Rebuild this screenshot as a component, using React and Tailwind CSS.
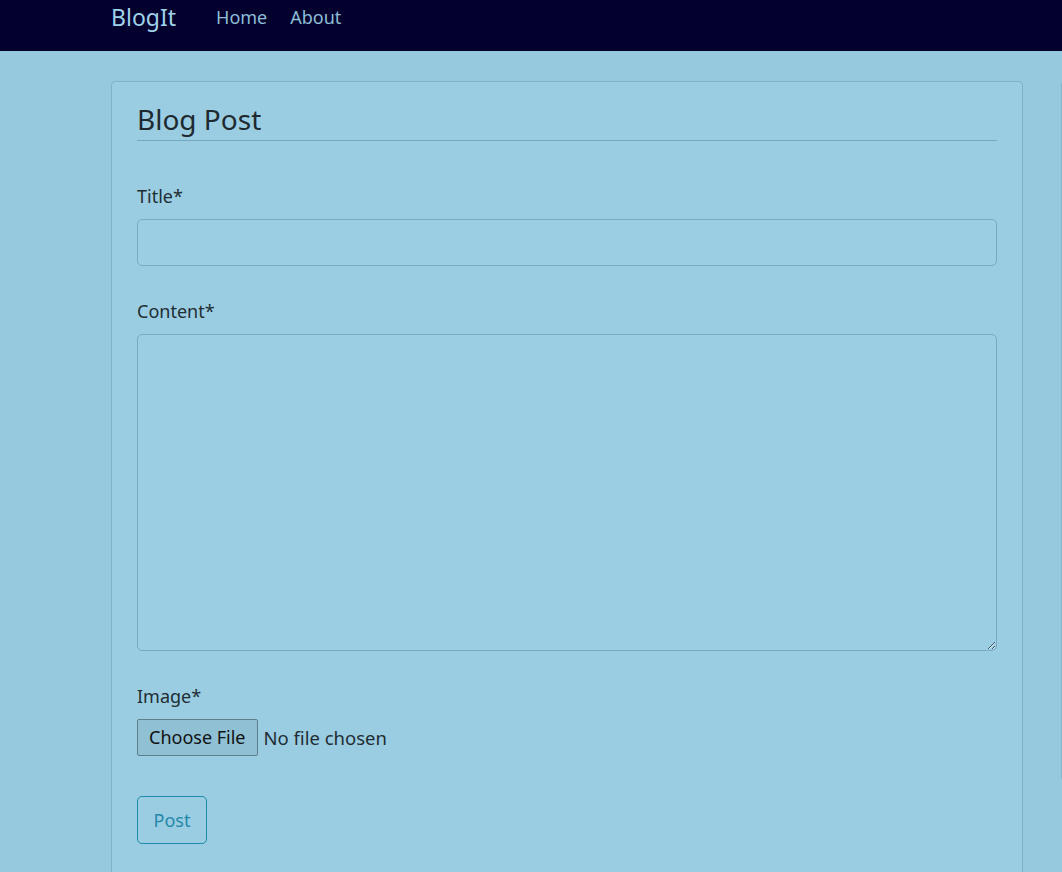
import { useState } from 'react'

const FONT = { fontFamily: '"Noto Sans", "Open Sans", sans-serif' }

function Field({ label, children }) {
  return (
    <div className="mb-[32px]">
      <label className="block text-[18px] leading-[27px] text-[#1f2d33] mb-[9px]">{label}</label>
      {children}
    </div>
  )
}

export default function App() {
  const [title, setTitle] = useState('')
  const [content, setContent] = useState('')

  return (
    <div className="min-h-screen overflow-x-hidden bg-[#96c9dd]" style={FONT}>
      {/* Navbar */}
      <nav className="h-[51px] bg-[#03002e]">
        <div className="h-full flex items-start pl-[111px] pt-[2px]">
          <a href="#" className="text-[23px] leading-[31px] text-[#9fd3ea] mr-[40px]">BlogIt</a>
          <div className="flex gap-[23px] pt-[2px]">
            <a href="#" className="text-[18px] leading-[27px] text-[#8cbfd6]">Home</a>
            <a href="#" className="text-[18px] leading-[27px] text-[#8cbfd6]">About</a>
          </div>
        </div>
      </nav>

      <main className="flex gap-[38px] pl-[111px] pt-[30px]">
        {/* Post form card */}
        <div className="w-[912px] shrink-0 bg-[#9acde2] border border-[#80b3c8] rounded-[4px] px-[25px] pt-[19px] pb-[40px]">
          <h3 className="text-[28px] leading-[37px] text-[#1e2a30] pb-[2px] border-b border-[#74a9bf] mb-[42px]">
            Blog Post
          </h3>

          <Field label="Title*">
            <input
              value={title}
              onChange={e => setTitle(e.target.value)}
              className="block w-full h-[47px] bg-[#9bcee3] border border-[#78abc1] rounded-[5px] px-3 outline-none"
            />
          </Field>

          <Field label="Content*">
            <textarea
              value={content}
              onChange={e => setContent(e.target.value)}
              className="block w-full h-[317px] bg-[#9bcee3] border border-[#78abc1] rounded-[5px] px-3 py-2 outline-none"
            />
          </Field>

          <Field label="Image*">
            <div className="flex items-center">
              <span className="h-[37px] px-[11px] flex items-center text-[18px] text-[#111] bg-[#8fc0d4] border border-[#5f7f8c] rounded-[2px]">
                Choose File
              </span>
              <span className="ml-[6px] text-[18.5px] text-[#1f2d33]">No file chosen</span>
            </div>
          </Field>

          <button
            type="button"
            className="mt-[8px] h-[48px] w-[70px] border border-[#1c89ab] rounded-[5px] text-[18px] text-[#2588ab]"
          >
            Post
          </button>
        </div>

        {/* Sidebar card (cut off) */}
        <div className="w-[300px] shrink-0 h-[700px] bg-[#9acde2] border border-[#80b3c8] rounded-[4px]" />
      </main>
    </div>
  )
}
